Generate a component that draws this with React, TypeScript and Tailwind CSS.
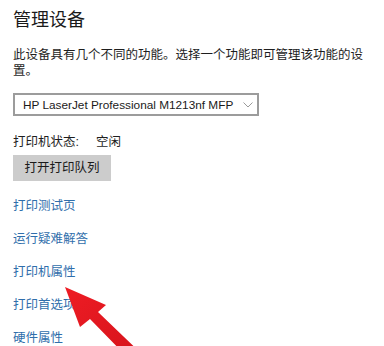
import React from "react";

const links = ["打印测试页", "运行疑难解答", "打印机属性", "打印首选项", "硬件属性"];

const Chevron: React.FC = () => (
  <svg width="10" height="6" viewBox="0 0 10 6" className="shrink-0">
    <path d="M0.5 0.5 L5 5 L9.5 0.5" fill="none" stroke="#9a9a9a" strokeWidth="1" />
  </svg>
);

const RedArrow: React.FC = () => (
  <svg
    className="absolute inset-0 pointer-events-none"
    width="384"
    height="346"
    viewBox="0 0 384 346"
  >
    <defs>
      <linearGradient id="arrowFill" x1="0" y1="0" x2="1" y2="1">
        <stop offset="0" stopColor="#ee1c24" />
        <stop offset="1" stopColor="#d4131b" />
      </linearGradient>
    </defs>
    <polygon
      points="65,287 106,305 98,312 148,360 130,360 90,319 80,327"
      fill="url(#arrowFill)"
    />
  </svg>
);

export default function App() {
  return (
    <div className="relative w-[384px] h-[346px] overflow-hidden bg-white font-['Liberation_Sans','Noto_Sans_CJK_SC',sans-serif] text-[#1e1e1e]">
      <div className="flex flex-col pl-[13px] pr-[16px] pt-[8px]">
        <h1 className="text-[18px] leading-[24px] font-normal text-[#1a1a1a]">管理设备</h1>

        <p className="mt-[15px] text-[12.5px] leading-[16px]">
          此设备具有几个不同的功能。选择一个功能即可管理该功能的设置。
        </p>

        <div className="mt-[14px] flex h-[23px] w-[246px] items-center border-2 border-[#9c9c9c] pl-[8px]">
          <span className="w-[220px] text-[11.8px] leading-[16px] text-[#1a1a1a]">
            HP LaserJet Professional M1213nf MFP
          </span>
          <Chevron />
        </div>

        <div className="mt-[18px] flex text-[12.5px] leading-[16px]">
          <span className="w-[83px]">打印机状态:</span>
          <span>空闲</span>
        </div>

        <button className="mt-[5px] flex h-[26px] w-[98px] items-center justify-center bg-[#cccccc] text-[12.5px] leading-[16px] text-[#1a1a1a]">
          打开打印队列
        </button>

        <div className="mt-[17px] flex flex-col gap-[17px]">
          {links.map((l) => (
            <a key={l} className="text-[12.5px] leading-[16px] text-[#2f6eab]">
              {l}
            </a>
          ))}
        </div>
      </div>
      <RedArrow />
    </div>
  );
}
